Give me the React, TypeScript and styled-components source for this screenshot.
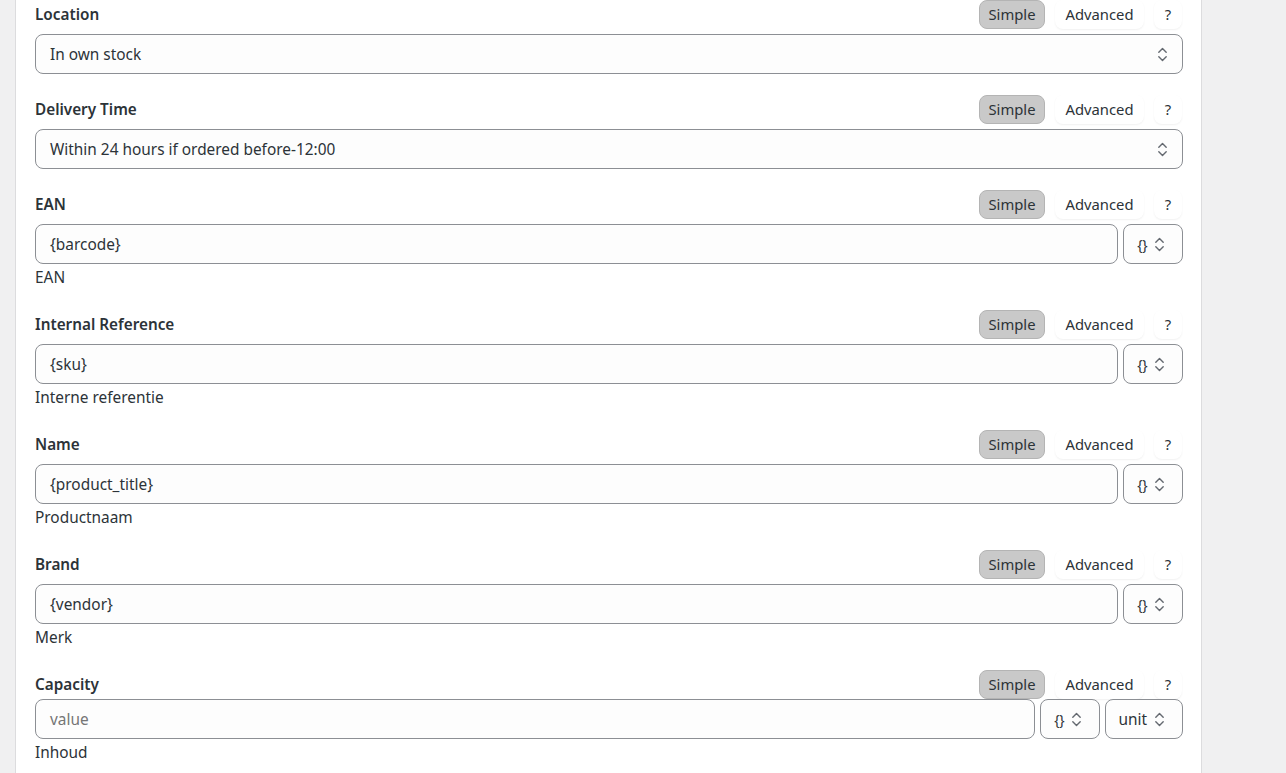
import React from "react";
import styled, { createGlobalStyle } from "styled-components";

const Global = createGlobalStyle`
  html, body { margin: 0; padding: 0; background: #f0f0f1; }
  body { font-family: "Noto Sans", "Open Sans", sans-serif; color: #2c3338; }
  * { box-sizing: border-box; }
`;

const Page = styled.div`
  display: flex;
  height: 773px;
  overflow: hidden;
  padding-left: 15px;
`;

const Card = styled.div`
  width: 1187px;
  background: #fff;
  border-left: 1px solid #dcdcde;
  border-right: 1px solid #dcdcde;
  padding: 0 18px 0 19px;
  display: flex;
  flex-direction: column;
  gap: 21px;
`;

const Section = styled.div`
  display: flex;
  flex-direction: column;
`;

const Header = styled.div<{ $tight?: boolean }>`
  display: flex;
  align-items: center;
  height: 29px;
  margin-bottom: ${(p) => (p.$tight ? 0 : 5)}px;
`;

const Label = styled.div`
  flex: 1;
  font-size: 15.3px;
  font-weight: 600;
  color: #2c3338;
  padding-bottom: 2px;
`;

const ModeGroup = styled.div`
  display: flex;
  gap: 10px;
  margin-right: 1px;
`;

const ModeButton = styled.button<{ $active?: boolean; $w: number }>`
  width: ${(p) => p.$w}px;
  height: 29px;
  border-radius: 8px;
  font-family: inherit;
  font-size: 14.8px;
  color: #2c3338;
  padding: 0 0 2px;
  cursor: pointer;
  background: ${(p) => (p.$active ? "#c9c9c9" : "#fff")};
  border: 1px solid ${(p) => (p.$active ? "#b4b4b4" : "transparent")};
  box-shadow: ${(p) => (p.$active ? "none" : "0 1px 2px rgba(0,0,0,0.06)")};
`;

const Row = styled.div`
  display: flex;
  gap: 5px;
`;

const Field = styled.div<{ $placeholder?: boolean }>`
  flex: 1;
  height: 40px;
  border: 1px solid #8c8f94;
  border-radius: 8px;
  background: #fdfdfd;
  display: flex;
  align-items: center;
  padding: 0 14px;
  font-size: 15.4px;
  color: ${(p) => (p.$placeholder ? "#757575" : "#2c3338")};
`;

const Value = styled.span`
  flex: 1;
`;

const Picker = styled.div<{ $w: number }>`
  width: ${(p) => p.$w}px;
  height: 40px;
  border: 1px solid #8c8f94;
  border-radius: 8px;
  background: #fdfdfd;
  display: flex;
  align-items: center;
  justify-content: flex-end;
  gap: 7px;
  padding: 0 17px 0 0;
  font-size: 15.4px;
  color: #2c3338;
`;

const Braces = styled.span`
  font-size: 14px;
  letter-spacing: -0.5px;
`;

const Help = styled.div`
  font-size: 15.4px;
  color: #2c3338;
  line-height: 22px;
  margin-top: 3px;
`;

const Chevrons = () => (
  <svg width="11" height="17" viewBox="0 0 11 17" fill="none" stroke="#646970" strokeWidth="1.4" strokeLinecap="round" strokeLinejoin="round">
    <path d="M1.8 6.2 L5.5 2.5 L9.2 6.2" />
    <path d="M1.8 10.8 L5.5 14.5 L9.2 10.8" />
  </svg>
);

type Sec = {
  label: string;
  kind: "select" | "var" | "unit";
  value: string;
  help?: string;
};

const sections: Sec[] = [
  { label: "Location", kind: "select", value: "In own stock" },
  { label: "Delivery Time", kind: "select", value: "Within 24 hours if ordered before-12:00" },
  { label: "EAN", kind: "var", value: "{barcode}", help: "EAN" },
  { label: "Internal Reference", kind: "var", value: "{sku}", help: "Interne referentie" },
  { label: "Name", kind: "var", value: "{product_title}", help: "Productnaam" },
  { label: "Brand", kind: "var", value: "{vendor}", help: "Merk" },
  { label: "Capacity", kind: "unit", value: "value", help: "Inhoud" },
];

export default function App() {
  return (
    <>
      <Global />
      <Page>
        <Card>
          {sections.map((s) => (
            <Section key={s.label}>
              <Header $tight={s.kind === "unit"}>
                <Label>{s.label}</Label>
                <ModeGroup>
                  <ModeButton $active $w={66}>Simple</ModeButton>
                  <ModeButton $w={89}>Advanced</ModeButton>
                  <ModeButton $w={28}>?</ModeButton>
                </ModeGroup>
              </Header>
              <Row>
                <Field $placeholder={s.kind === "unit"}>
                  <Value>{s.value}</Value>
                  {s.kind === "select" && <Chevrons />}
                </Field>
                {(s.kind === "var" || s.kind === "unit") && (
                  <Picker $w={60}>
                    <Braces>{"{}"}</Braces>
                    <Chevrons />
                  </Picker>
                )}
                {s.kind === "unit" && (
                  <Picker $w={78}>
                    <span>unit</span>
                    <Chevrons />
                  </Picker>
                )}
              </Row>
              {s.help && <Help>{s.help}</Help>}
            </Section>
          ))}
        </Card>
      </Page>
    </>
  );
}
